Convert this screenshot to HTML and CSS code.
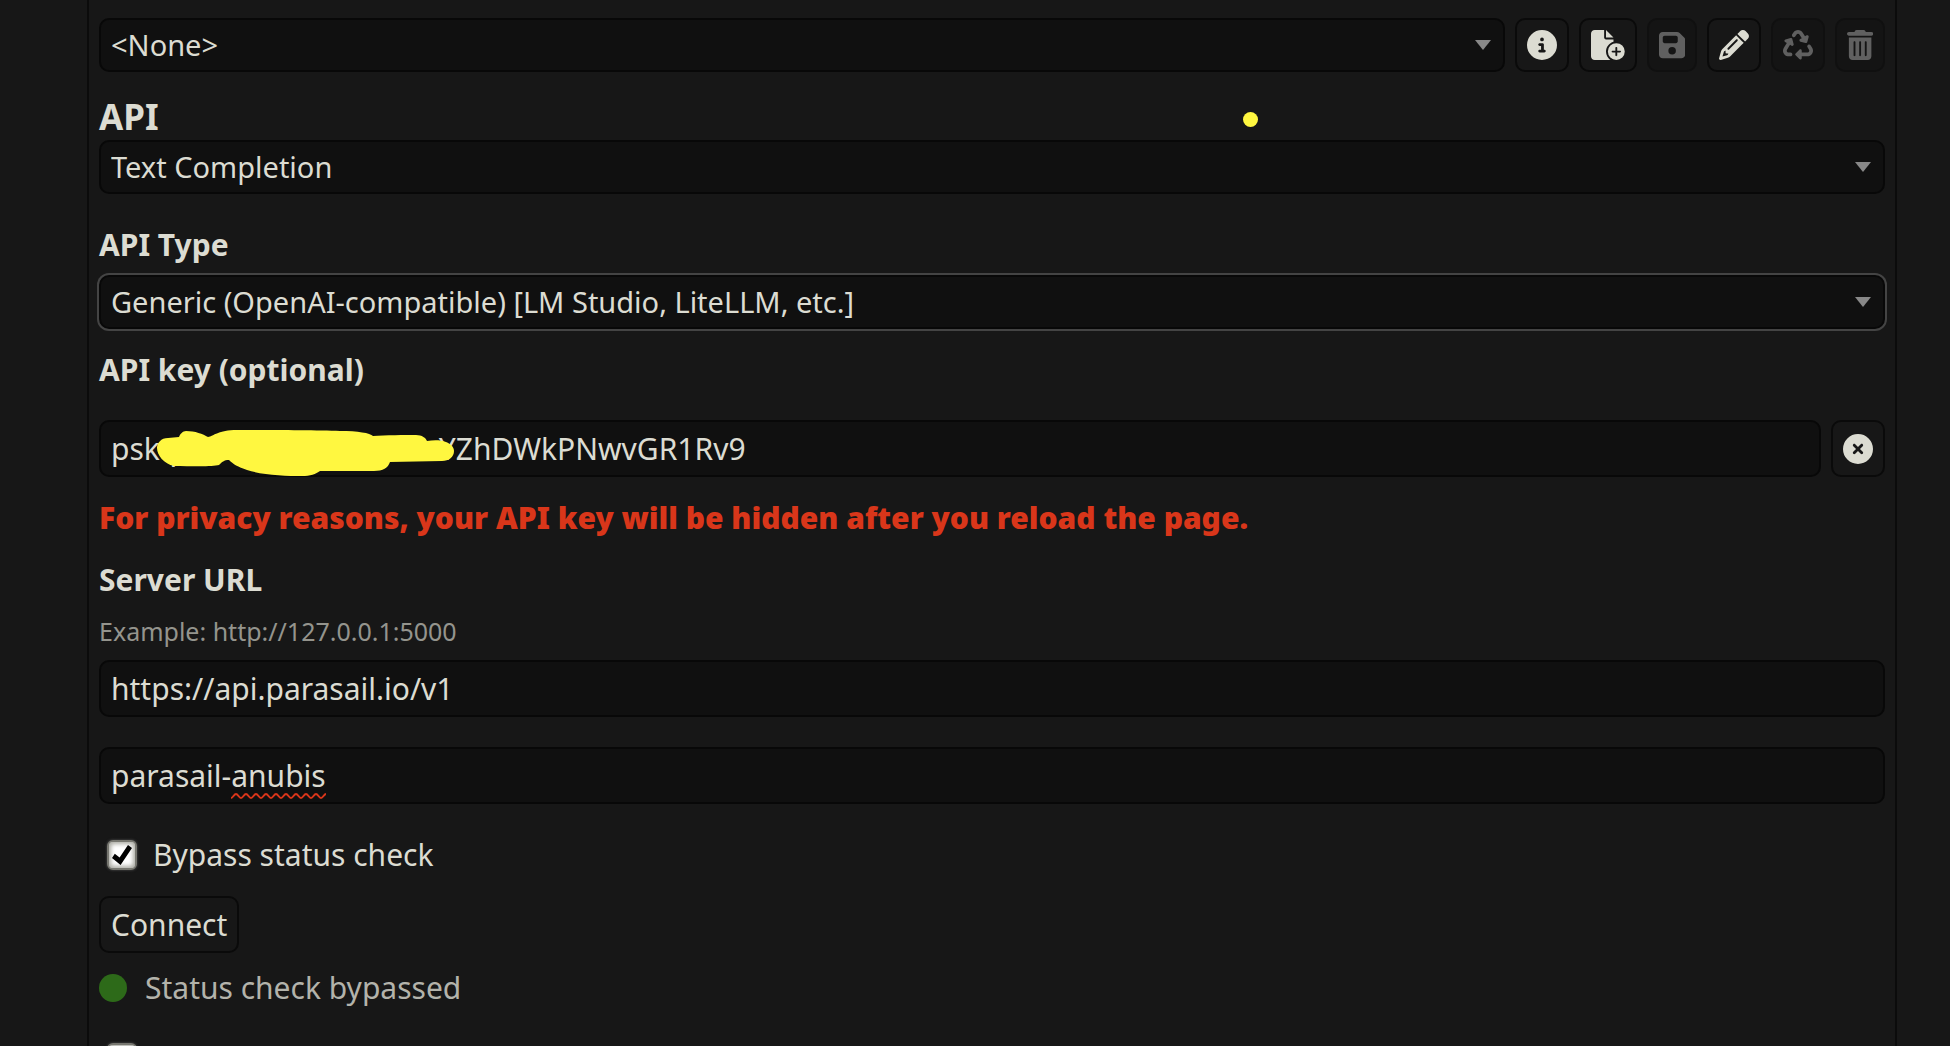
FILE: index.html
```html
<!DOCTYPE html>
<html lang="en">
<head>
  <meta charset="UTF-8" />
  <meta name="viewport" content="width=device-width, initial-scale=1.0"/>
  <title>API Connections</title>
  <link rel="stylesheet" href="styles.css">
</head>
<body>
<main class="panel">
  <div class="row profile-row">
    <select class="text-pole" aria-label="Connection profile">
      <option>&lt;None&gt;</option>
    </select>
    <button class="menu-button" aria-label="Profile details">
      <svg class="icon" viewBox="0 0 512 512"><path d="M256 512A256 256 0 1 0 256 0a256 256 0 1 0 0 512zM216 336h24V272H216c-13.3 0-24-10.7-24-24s10.7-24 24-24h48c13.3 0 24 10.7 24 24v88h8c13.3 0 24 10.7 24 24s-10.7 24-24 24H216c-13.3 0-24-10.7-24-24s10.7-24 24-24zm40-208a32 32 0 1 1 0 64 32 32 0 1 1 0-64z"/></svg>
    </button>
    <button class="menu-button" aria-label="Create profile">
      <svg class="icon" viewBox="0 0 576 512"><path d="M0 64C0 28.7 28.7 0 64 0H224V128c0 17.7 14.3 32 32 32H384v38.6C310.1 219.5 256 287.4 256 368c0 59.1 29.1 111.3 73.7 143.3c-3.2 .5-6.4 .7-9.7 .7H64c-35.3 0-64-28.7-64-64V64zm384 64H256V0L384 128zm48 96a144 144 0 1 1 0 288 144 144 0 1 1 0-288zm16 80c0-8.8-7.2-16-16-16s-16 7.2-16 16v48H368c-8.8 0-16 7.2-16 16s7.2 16 16 16h48v48c0 8.8 7.2 16 16 16s16-7.2 16-16V384h48c8.8 0 16-7.2 16-16s-7.2-16-16-16H448V304z"/></svg>
    </button>
    <button class="menu-button" aria-label="Save profile" disabled>
      <svg class="icon" viewBox="0 0 448 512"><path d="M64 32C28.7 32 0 60.7 0 96V416c0 35.3 28.7 64 64 64H384c35.3 0 64-28.7 64-64V173.3c0-17-6.7-33.3-18.7-45.3L352 50.7C340 38.7 323.7 32 306.7 32H64zm0 96c0-17.7 14.3-32 32-32H288c17.7 0 32 14.3 32 32v64c0 17.7-14.3 32-32 32H96c-17.7 0-32-14.3-32-32V128zM224 288a64 64 0 1 1 0 128 64 64 0 1 1 0-128z"/></svg>
    </button>
    <button class="menu-button" aria-label="Edit profile">
      <svg class="icon" viewBox="0 0 512 512"><path d="M410.3 231l11.3-11.3-33.9-33.9-62.1-62.1L291.7 89.8l-11.3 11.3-22.6 22.6L58.6 322.9c-10.4 10.4-18 23.3-22.2 37.4L1 480.7c-2.5 8.4-.2 17.5 6.1 23.7s15.3 8.5 23.7 6.1l120.3-35.4c14.1-4.2 27-11.8 37.4-22.2L387.7 253.7 410.3 231zM160 399.4l-9.1 22.7c-4 3.1-8.5 5.4-13.3 6.9L59.4 452l23-78.1c1.4-4.9 3.8-9.4 6.9-13.3l22.7-9.1v32c0 8.8 7.2 16 16 16h32zM362.7 18.7L348.3 33.2 325.7 55.8 314.3 67.1l33.9 33.9 62.1 62.1 33.9 33.9 11.3-11.3 22.6-22.6 14.5-14.5c25-25 25-65.5 0-90.5L453.3 18.7c-25-25-65.5-25-90.5 0zm-47.4 168l-144 144c-6.2 6.2-16.4 6.2-22.6 0s-6.2-16.4 0-22.6l144-144c6.2-6.2 16.4-6.2 22.6 0s6.2 16.4 0 22.6z"/></svg>
    </button>
    <button class="menu-button" aria-label="Reload profile" disabled>
      <svg class="icon" viewBox="0 0 512 512"><path d="M174.7 45.1C192.2 17 223 0 256 0s63.8 17 81.3 45.1l38.6 61.7 27-15.6c8.4-4.9 18.9-4.2 26.6 1.7s11.1 15.9 8.6 25.3l-23.4 87.4c-3.4 12.8-16.6 20.4-29.4 17l-87.4-23.4c-9.4-2.5-16.3-10.4-17.6-20s3.4-19.1 11.8-23.9l28.4-16.4L283 79c-5.8-9.3-16-15-27-15s-21.2 5.7-27 15l-17.5 28c-9.2 14.8-28.6 19.5-43.6 10.5c-15.3-9.2-20.2-29.2-10.7-44.4l17.5-28zM429.5 251.9c15-9 34.4-4.3 43.6 10.5l24.4 39.1c9.4 15.1 14.4 32.4 14.6 50.2c.3 53.1-42.7 96.4-95.8 96.4L320 448v32c0 9.7-5.8 18.5-14.8 22.2s-19.3 1.7-26.2-5.2l-64-64c-9.4-9.4-9.4-24.6 0-33.9l64-64c6.9-6.9 17.2-8.9 26.2-5.2s14.8 12.5 14.8 22.2v32l96.2 0c17.6 0 31.9-14.4 31.8-32c0-5.9-1.7-11.7-4.8-16.7l-24.4-39.1c-9.5-15.2-4.7-35.2 10.7-44.4zm-364.6-31L36 204.2c-8.4-4.9-13.1-14.3-11.8-23.9s8.2-17.5 17.6-20l87.4-23.4c12.8-3.4 26 4.2 29.4 17L182 241.2c2.5 9.4-.9 19.3-8.6 25.3s-18.2 6.6-26.6 1.7l-26.5-15.3L68.8 335.3c-3.1 5-4.8 10.8-4.8 16.7c-.1 17.6 14.2 32 31.8 32l32.2 0c17.7 0 32 14.3 32 32s-14.3 32-32 32l-32.2 0C42.7 448-.3 404.8 0 351.6c.1-17.8 5.1-35.1 14.6-50.2l50.3-80.5z"/></svg>
    </button>
    <button class="menu-button" aria-label="Delete profile" disabled>
      <svg class="icon" viewBox="0 0 448 512"><path d="M135.2 17.7L128 32H32C14.3 32 0 46.3 0 64S14.3 96 32 96H416c17.7 0 32-14.3 32-32s-14.3-32-32-32H320l-7.2-14.3C307.4 6.8 296.3 0 284.2 0H163.8c-12.1 0-23.2 6.8-28.6 17.7zM416 128H32V448c0 35.3 28.7 64 64 64H352c35.3 0 64-28.7 64-64V128zM144 208V432c0 8.8-7.2 16-16 16s-16-7.2-16-16V208c0-8.8 7.2-16 16-16s16 7.2 16 16zm96 0V432c0 8.8-7.2 16-16 16s-16-7.2-16-16V208c0-8.8 7.2-16 16-16s16 7.2 16 16zm96 0V432c0 8.8-7.2 16-16 16s-16-7.2-16-16V208c0-8.8 7.2-16 16-16s16 7.2 16 16z"/></svg>
    </button>
  </div>

  <div class="api-block">
    <h3><label for="mainApi">API</label></h3>
    <select class="text-pole" id="mainApi">
      <option>Text Completion</option>
    </select>
    <span class="marker-dot"></span>
  </div>

  <h4><label for="apiType">API Type</label></h4>
  <select class="text-pole focused" id="apiType">
    <option>Generic (OpenAI-compatible) [LM Studio, LiteLLM, etc.]</option>
  </select>

  <h4 class="key-title"><label for="apiKey">API key (optional)</label></h4>
  <div class="row key-row">
    <input class="text-pole" id="apiKey" type="text" value="psk-pssxxxxxxxxxxxxxxYZhDWkPNwvGR1Rv9" autocomplete="off">
    <button class="menu-button" aria-label="Clear your API key">
      <svg class="icon" viewBox="0 0 512 512"><path d="M256 512A256 256 0 1 0 256 0a256 256 0 1 0 0 512zM175 175c9.4-9.4 24.6-9.4 33.9 0l47 47 47-47c9.4-9.4 24.6-9.4 33.9 0s9.4 24.6 0 33.9l-47 47 47 47c9.4 9.4 9.4 24.6 0 33.9s-24.6 9.4-33.9 0l-47-47-47 47c-9.4 9.4-24.6 9.4-33.9 0s-9.4-24.6 0-33.9l47-47-47-47c-9.4-9.4-9.4-24.6 0-33.9z"/></svg>
    </button>
    <!-- marker scribble over the middle of the key -->
    <svg class="scribble" viewBox="156 430 298 47"><path d="M157 448C157 443 161 438 168 438L179 437C180 434 183 431 186 431C195 431 203 434 208 437C214 436 218 430 237 430C265 430 315 430 340 431C358 431 370 433 373 436C385 435 405 435 416 435C422 435 426 438 427 441C434 440 441 440 446 442C451 444 454 447 454 451C454 457 449 461 442 461L390 462C388 468 383 471 374 471L320 471C316 474 310 476 302 476C286 476 262 475 247 470C238 467 233 464 229 460C224 460 222 462 219 465C212 467 190 466 174 466C164 464 157 455 157 448Z"/></svg>
  </div>

  <p class="warning">For privacy reasons, your API key will be hidden after you reload the page.</p>

  <h4 class="url-title"><label for="serverUrl">Server URL</label></h4>
  <small class="hint">Example: http://127.0.0.1:5000</small>
  <input class="text-pole" id="serverUrl" type="text" value="https://api.parasail.io/v1">

  <div class="model-row">
    <input class="text-pole" id="modelId" type="text" value="parasail-anubis" aria-label="Model ID" spellcheck="false">
    <svg class="squiggle" viewBox="0 0 95 6"><path d="M0 5c2 0 3-4 5-4s3 4 5 4 3-4 5-4 3 4 5 4 3-4 5-4 3 4 5 4 3-4 5-4 3 4 5 4 3-4 5-4 3 4 5 4 3-4 5-4 3 4 5 4 3-4 5-4 3 4 5 4 3-4 5-4 3 4 5 4 3-4 5-4 3 4 5 4 3-4 5-4"/></svg>
  </div>

  <label class="check"><input type="checkbox" checked> Bypass status check</label>

  <button class="menu-button connect">Connect</button>

  <div class="status"><span class="status-light"></span>Status check bypassed</div>

  <div class="check"><input type="checkbox" aria-label="Auto-connect to last server"></div>
</main>
</body>
</html>
```
FILE: styles.css
```css
* { box-sizing: border-box; }
html { height: 100%; }
body {
  margin: 0;
  height: 100%;
  overflow: hidden;
  background: #171717;
  color: #dcdcd2;
  font: 30px/42px "Noto Sans", sans-serif;
}
.panel {
  display: flex;
  flex-direction: column;
  align-items: flex-start;
  min-height: 100%;
  margin: 0 53px 0 87px;
  padding: 18px 10px 0;
  border: 2px solid #0b0b0b;
  border-width: 0 2px;
}
h3, h4, p { margin: 0; }
h3 { font-size: 35px; line-height: 46px; }
h4 { font-size: 30px; margin: 30px 0 9px; }

.row { display: flex; gap: 10px; width: 100%; position: relative; }
.row .text-pole { flex: 1; min-width: 0; }

.text-pole {
  display: block;
  width: 100%;
  height: 57px;
  padding: 0 10px;
  border: 2px solid #080808;
  border-radius: 10px;
  background: #101010;
  color: #dcdcd2;
  font: inherit;
  outline: none;
}
select.text-pole {
  height: 54px;
  padding: 0 40px 0 10px;
  font-size: 29px;
  appearance: none;
  background: #101010 url("data:image/svg+xml,%3Csvg xmlns='http://www.w3.org/2000/svg' width='16' height='10'%3E%3Cpath d='M0 0h16L8 10z' fill='%23888'/%3E%3C/svg%3E") no-repeat right 12px center;
}
.text-pole.focused { box-shadow: 0 0 0 2px #444; }

.menu-button {
  display: flex;
  align-items: center;
  padding: 0 10px;
  border: 2px solid #0a0a0a;
  border-radius: 10px;
  background: #171717;
  color: #dcdcd2;
  font: inherit;
  cursor: pointer;
}
.menu-button:disabled {
  background: #141414;
  border-color: #101010;
  color: #606060;
}
.icon { display: block; height: 30px; fill: currentColor; }

.api-block { position: relative; width: 100%; margin-top: 22px; }
.marker-dot {
  position: absolute;
  top: 18px;
  left: 1144px;
  width: 15px;
  height: 15px;
  border-radius: 50%;
  background: #fff740;
}

.key-title { margin: 20px 0 29px; }
.scribble {
  position: absolute;
  top: 10px;
  left: 57px;
  width: 298px;
  height: 47px;
  fill: #fff740;
}

.warning {
  margin-top: 20px;
  color: #d9361a;
  font-weight: 900;
}
.url-title { margin: 20px 0 12px; }
.hint { margin-bottom: 11px; color: #94948d; font-size: 25px; line-height: 36px; }

.model-row { position: relative; width: 100%; margin: 30px 0; }
.squiggle {
  position: absolute;
  top: 46px;
  left: 132px;
  width: 95px;
  height: 6px;
  fill: none;
  stroke: #d9361a;
  stroke-width: 2;
}

.check { display: flex; align-items: center; gap: 16px; min-height: 42px; }
.check input {
  appearance: none;
  display: grid;
  place-content: center;
  width: 30px;
  height: 30px;
  margin: 0 0 0 8px;
  border-radius: 6px;
  background: #fff;
  border: 2px solid #777770;
  box-shadow: inset 0 0 4px 2px #aaaaa2, 0 0 2px 1px #333;
}
.check input:checked::before {
  content: "";
  width: 20px;
  height: 20px;
  background: #000;
  clip-path: polygon(14% 44%, 0 65%, 43% 100%, 100% 15%, 80% 0, 38% 62%);
}

.connect { height: 57px; margin: 20px 0 14px; }
.status { display: flex; align-items: center; gap: 18px; margin-bottom: 28px; color: #b3b3ab; }
.status-light { width: 28px; height: 28px; border-radius: 50%; background: #2d6a19; }
```
